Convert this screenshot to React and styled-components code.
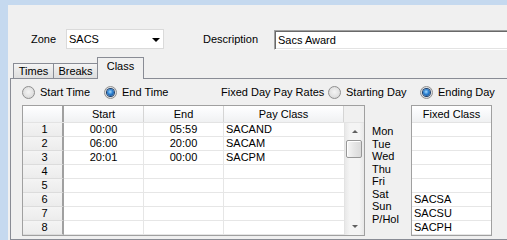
import React from 'react';
import styled, { createGlobalStyle } from 'styled-components';

const Global = createGlobalStyle`
  html, body { margin: 0; padding: 0; background: #f0f0f0; }
  body { font-family: "Liberation Sans", Arial, sans-serif; font-size: 11px; color: #000; }
  #root { width: 507px; height: 240px; overflow: hidden; }
`;

const Window = styled.div`
  box-sizing: border-box;
  width: 507px;
  height: 240px;
  overflow: hidden;
  background: #f0f0f0;
  border-left: 8px solid #c5d9ef;
  border-top: 5px solid #c5d9ef;
  display: flex;
  flex-direction: column;
`;

const TopRow = styled.div`
  display: flex;
  align-items: center;
  height: 20px;
  margin-top: 24px;
  padding-left: 23px;
`;

const FieldLabel = styled.span`
  flex: none;
  width: ${p => p.$w}px;
  margin-left: ${p => p.$ml || 0}px;
  line-height: 20px;
`;

const Combo = styled.div`
  flex: none;
  box-sizing: border-box;
  width: 98px;
  height: 20px;
  background: #fff;
  border: 1px solid #dadada;
  display: flex;
  align-items: center;
  justify-content: space-between;
  padding: 0 3px 0 2px;
`;

const ComboArrow = styled.span`
  width: 0;
  height: 0;
  border-left: 4px solid transparent;
  border-right: 4px solid transparent;
  border-top: 4px solid #000;
  margin-top: 1px;
`;

const TextBox = styled.div`
  flex: none;
  box-sizing: border-box;
  width: 260px;
  height: 20px;
  margin-top: 1px;
  background: #fff;
  border-top: 1px solid #a0a0a0;
  border-left: 1px solid #a0a0a0;
  border-bottom: 1px solid #ffffff;
  border-right: 1px solid #ffffff;
  box-shadow: inset 1px 1px 0 #696969, inset -1px -1px 0 #e3e3e3;
  padding-left: 3px;
  line-height: 18px;
`;

const TabStrip = styled.div`
  display: flex;
  align-items: flex-end;
  height: 21px;
  margin-top: 8px;
  margin-left: 5px;
  position: relative;
  z-index: 1;
`;

const Tab = styled.div`
  flex: none;
  box-sizing: border-box;
  width: ${p => p.$w}px;
  height: ${p => (p.$active ? 22 : 15)}px;
  margin-bottom: ${p => (p.$active ? -1 : 0)}px;
  margin-left: ${p => (p.$first ? 0 : -1)}px;
  border: 1px solid #898c95;
  border-bottom: none;
  background: ${p => (p.$active ? '#f0f0f0' : 'linear-gradient(#f5f5f5, #e8e8e8 50%, #dedede)')};
  text-align: center;
  line-height: ${p => (p.$active ? 17 : 14)}px;
  position: relative;
  z-index: ${p => (p.$active ? 2 : 1)};
`;

const Panel = styled.div`
  flex: 1;
  box-sizing: border-box;
  width: 520px;
  margin-left: 2px;
  border: 1px solid #898c95;
  background: #f0f0f0;
  padding: 3px 0 0 11px;
  display: flex;
  flex-direction: column;
`;

const RadioRow = styled.div`
  display: flex;
  align-items: center;
  height: 20px;
`;

const RadioItem = styled.div`
  flex: none;
  display: flex;
  align-items: center;
  gap: 5px;
  width: ${p => (p.$w ? `${p.$w}px` : 'auto')};
`;

const RadioDot = styled.span`
  flex: none;
  box-sizing: border-box;
  width: 13px;
  height: 13px;
  border-radius: 50%;
  border: 1px solid #8f8f8f;
  background: radial-gradient(circle at 50% 45%, #f4f4f4 0%, #e2e2e2 55%, #cdcdcd 100%);
  display: flex;
  align-items: center;
  justify-content: center;
  &::after {
    content: '';
    display: ${p => (p.$checked ? 'block' : 'none')};
    width: 7px;
    height: 7px;
    border-radius: 50%;
    background: radial-gradient(circle at 45% 40%, #a6dcff 0%, #2a7fd0 45%, #123f7a 100%);
    box-shadow: 0 0 0 1px #1b3d6a;
  }
`;

const Caption = styled.span`
  flex: none;
  width: ${p => p.$w}px;
`;

const GridArea = styled.div`
  display: flex;
  margin-top: 3px;
`;

const GridBox = styled.div`
  flex: none;
  box-sizing: border-box;
  width: ${p => p.$w}px;
  height: 131px;
  border: 1px solid #a0a0a0;
  background: #fff;
  display: flex;
  flex-direction: column;
`;

const HeadRow = styled.div`
  display: flex;
  height: 17px;
  flex: none;
  box-sizing: border-box;
  border-bottom: 1px solid #e3e3e3;
  background: linear-gradient(#ffffff, #f7f8fa 50%, #f0f1f2);
`;

const HeadCell = styled.div`
  flex: none;
  box-sizing: border-box;
  width: ${p => p.$w}px;
  border-right: ${p => (p.$thick ? '2px solid #a0a0a0' : p.$last ? 'none' : '1px solid #d5d5d5')};
  text-align: center;
  line-height: 16px;
  background: ${p => (p.$fill ? '#f0f0f0' : 'transparent')};
`;

const Body = styled.div`
  display: flex;
  flex: 1;
`;

const Rows = styled.div`
  display: flex;
  flex-direction: column;
  flex: none;
`;

const Row = styled.div`
  display: flex;
  height: 14px;
`;

const RowNum = styled.div`
  flex: none;
  box-sizing: border-box;
  width: 41px;
  background: linear-gradient(#f4f4f4, #ececec);
  border-right: 2px solid #a0a0a0;
  border-bottom: 1px solid #dcdcdc;
  text-align: center;
  line-height: 13px;
  padding-left: 4px;
`;

const Cell = styled.div`
  flex: none;
  box-sizing: border-box;
  width: ${p => p.$w}px;
  border-right: ${p => (p.$last ? 'none' : '1px solid #e6e6e6')};
  border-bottom: 1px solid #e6e6e6;
  text-align: ${p => p.$align || 'left'};
  padding-left: ${p => (p.$align === 'center' ? 0 : 2)}px;
  line-height: 13px;
  white-space: nowrap;
  overflow: hidden;
`;

const ScrollBar = styled.div`
  flex: none;
  box-sizing: border-box;
  width: 20px;
  border-left: 1px solid #e3e3e3;
  background: linear-gradient(90deg, #e8e8e8, #f4f4f4 25%, #f4f4f4 75%, #e8e8e8);
  display: flex;
  flex-direction: column;
`;

const ScrollBtn = styled.div`
  height: 17px;
  flex: none;
  display: flex;
  align-items: center;
  justify-content: center;
  &::after {
    content: '';
    width: 0;
    height: 0;
    border-left: 3px solid transparent;
    border-right: 3px solid transparent;
    ${p => (p.$down ? 'border-top: 3px solid #606060;' : 'border-bottom: 3px solid #606060;')}
  }
`;

const Thumb = styled.div`
  flex: none;
  box-sizing: border-box;
  height: 18px;
  margin: 0 2px 0 1px;
  border: 1px solid #979797;
  border-radius: 2px;
  background: linear-gradient(90deg, #f6f6f6, #e6e6e6 50%, #dadada);
  box-shadow: inset 1px 1px 0 #fff;
`;

const Track = styled.div`
  flex: 1;
`;

const DayList = styled.div`
  flex: none;
  width: 39px;
  margin-left: 7px;
  padding-top: 20px;
  line-height: 12.5px;
  display: flex;
  flex-direction: column;
`;

const cols = [
  { key: 's', w: 80, align: 'center', title: 'Start' },
  { key: 'e', w: 80, align: 'center', title: 'End' },
  { key: 'p', w: 120, align: 'left', title: 'Pay Class', last: true },
];

const rows = [
  { s: '00:00', e: '05:59', p: 'SACAND' },
  { s: '06:00', e: '20:00', p: 'SACAM' },
  { s: '20:01', e: '00:00', p: 'SACPM' },
  {}, {}, {}, {}, {},
];

const days = ['Mon', 'Tue', 'Wed', 'Thu', 'Fri', 'Sat', 'Sun', 'P/Hol'];
const fixed = ['', '', '', '', '', 'SACSA', 'SACSU', 'SACPH'];

function Radio({ checked, label, w }) {
  return (
    <RadioItem $w={w}>
      <RadioDot $checked={checked} />
      <span>{label}</span>
    </RadioItem>
  );
}

export default function App() {
  return (
    <>
      <Global />
      <Window>
        <TopRow>
          <FieldLabel $w={35}>Zone</FieldLabel>
          <Combo>
            <span>SACS</span>
            <ComboArrow />
          </Combo>
          <FieldLabel $w={71} $ml={39}>Description</FieldLabel>
          <TextBox>Sacs Award</TextBox>
        </TopRow>
        <TabStrip>
          <Tab $w={41} $first>Times</Tab>
          <Tab $w={45}>Breaks</Tab>
          <Tab $w={47} $active>Class</Tab>
        </TabStrip>
        <Panel>
          <RadioRow>
            <Radio label="Start Time" w={82} />
            <Radio label="End Time" checked w={117} />
            <Caption $w={107}>Fixed Day Pay Rates</Caption>
            <Radio label="Starting Day" w={92} />
            <Radio label="Ending Day" checked />
          </RadioRow>
          <GridArea>
            <GridBox $w={343}>
              <HeadRow>
                <HeadCell $w={41} $thick />
                {cols.map(c => (
                  <HeadCell key={c.key} $w={c.w}>{c.title}</HeadCell>
                ))}
                <HeadCell $w={20} $last $fill />
              </HeadRow>
              <Body>
                <Rows>
                  {rows.map((r, i) => (
                    <Row key={i}>
                      <RowNum>{i + 1}</RowNum>
                      {cols.map(c => (
                        <Cell key={c.key} $w={c.w} $align={c.align} $last={c.last}>
                          {r[c.key] || ''}
                        </Cell>
                      ))}
                    </Row>
                  ))}
                </Rows>
                <ScrollBar>
                  <ScrollBtn />
                  <Thumb />
                  <Track />
                  <ScrollBtn $down />
                </ScrollBar>
              </Body>
            </GridBox>
            <DayList>
              {days.map(d => (
                <span key={d}>{d}</span>
              ))}
            </DayList>
            <GridBox $w={81}>
              <HeadRow>
                <HeadCell $w={79} $last>Fixed Class</HeadCell>
              </HeadRow>
              <Rows>
                {fixed.map((f, i) => (
                  <Row key={i}>
                    <Cell $w={79} $last>{f}</Cell>
                  </Row>
                ))}
              </Rows>
            </GridBox>
          </GridArea>
        </Panel>
      </Window>
    </>
  );
}
